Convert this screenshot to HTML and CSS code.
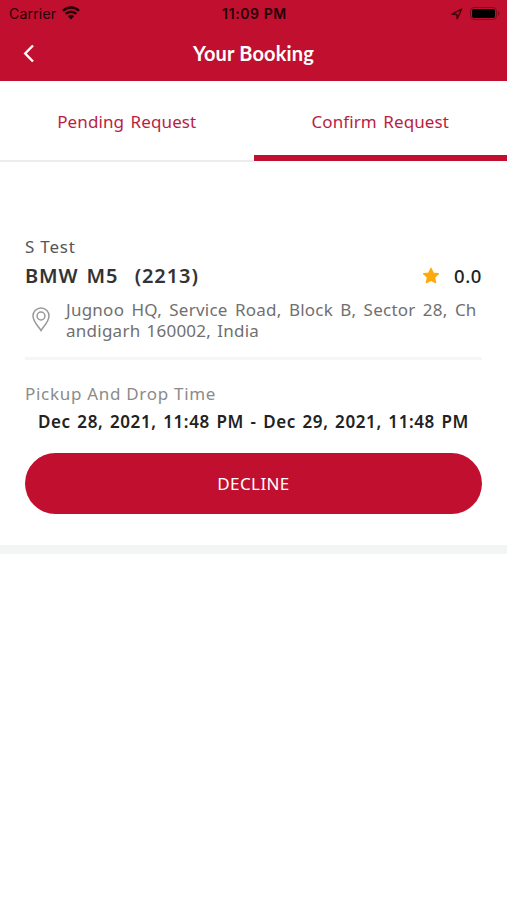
FILE: index.html
```html
<!DOCTYPE html>
<html lang="en">
<head>
  <meta charset="UTF-8">
  <meta name="viewport" content="width=device-width, initial-scale=1">
  <title>Your Booking</title>
  <link rel="stylesheet" href="styles.css">
</head>
<body>
  <header class="header">
    <div class="status-bar">
      <div class="status-left">
        <span class="carrier">Carrier</span>
        <svg class="wifi" viewBox="0 0 18 14" width="18" height="14">
          <path d="M1 4.8a11.500 11.500 0 0 1 16 0M3.700 7.900a7.600 7.600 0 0 1 10.600 0" fill="none" stroke="#240006" stroke-width="2.500"/>
          <path d="M9 13.400L5.900 10.300a4.500 4.500 0 0 1 6.200 0z" fill="#240006"/>
        </svg>
      </div>
      <span class="time">11:09 PM</span>
      <div class="status-right">
        <svg class="location" viewBox="0 0 12 12" width="12" height="12">
          <path d="M1 6.200L10.600 1.200 6.200 10.800 5.800 6.400z" fill="none" stroke="#4a000b" stroke-width="1.500" stroke-linejoin="round"/>
        </svg>
        <svg class="battery" viewBox="0 0 30 13" width="30" height="13">
          <rect x="0.500" y="0.500" width="26" height="12" rx="3.500" fill="none" stroke="#85091e"/>
          <rect x="2" y="2" width="23" height="9" rx="2" fill="#000"/>
          <path d="M28 4.300c2 .9 2 3.500 0 4.400z" fill="#85091e"/>
        </svg>
      </div>
    </div>
    <div class="nav-bar">
      <a class="back" href="#" aria-label="Back">
        <svg viewBox="0 0 12 20" width="12" height="20">
          <path d="M10 1.500L2.200 9.500l7.800 8" fill="none" stroke="#fff" stroke-width="2.400"/>
        </svg>
      </a>
      <h1>Your Booking</h1>
    </div>
  </header>

  <nav class="tabs">
    <a class="tab" href="#">Pending Request</a>
    <a class="tab active" href="#">Confirm Request</a>
  </nav>

  <main class="booking">
    <p class="owner">S Test</p>
    <div class="car-row">
      <h2>BMW M5 &nbsp;(2213)</h2>
      <div class="rating">
        <svg viewBox="0 0 18 18" width="18" height="18">
          <path d="M9 1.500l2.200 4.700 5.100.6-3.800 3.500 1 5.200L9 13l-4.500 2.500 1-5.200L1.700 6.800l5.100-.6z" fill="#ffa90a" stroke="#ffa90a" stroke-width="1.500" stroke-linejoin="round"/>
        </svg>
        <span class="score">0.0</span>
      </div>
    </div>
    <div class="address">
      <svg class="pin" viewBox="0 0 18 25" width="18" height="25">
        <path d="M9 23.500C6.500 19.500 1 14.500 1 8.900a8 8 0 0 1 16 0C17 14.500 11.500 19.500 9 23.500z" fill="none" stroke="#999" stroke-width="1.500"/>
        <circle cx="9" cy="9" r="3.900" fill="none" stroke="#999" stroke-width="1.500"/>
      </svg>
      <p><span class="street">Jugnoo HQ, Service Road, Block B, Sector 28, Ch</span><br><span class="city">andigarh 160002, India</span></p>
    </div>
    <p class="label">Pickup And Drop Time</p>
    <p class="dates">Dec 28, 2021, 11:48 PM - Dec 29, 2021, 11:48 PM</p>
    <button type="button" class="btn">DECLINE</button>
  </main>
</body>
</html>
```

FILE: styles.css
```css
* {
  margin: 0;
  padding: 0;
  box-sizing: border-box;
}

body {
  background: #fff;
  font-family: "Noto Sans", sans-serif;
  min-height: 100vh;
}

a {
  color: inherit;
  text-decoration: none;
}

svg {
  display: block;
}

.header {
  height: 81px;
  background: #c1102f;
}

.status-bar {
  display: grid;
  grid-template-columns: 1fr auto 1fr;
  align-items: center;
  height: 27px;
  padding: 0 7px 0 9px;
  font-family: Inter, sans-serif;
  color: #240006;
}

.status-left,
.status-right {
  display: flex;
  align-items: center;
}

.status-left {
  gap: 6px;
}

.status-right {
  justify-content: flex-end;
  gap: 7px;
}

.carrier {
  font-size: 14px;
  letter-spacing: 0.2px;
}

.wifi {
  margin-bottom: 2px;
}

.time {
  font-size: 14px;
  font-weight: 600;
  letter-spacing: 0.6px;
}

.nav-bar {
  display: grid;
  grid-template-columns: 60px 1fr 60px;
  align-items: center;
  height: 53px;
}

.back {
  padding-left: 23px;
}

.nav-bar h1 {
  padding-bottom: 2px;
  color: #fff;
  font-family: Lato, sans-serif;
  font-size: 20px;
  font-weight: 700;
  line-height: 28px;
  letter-spacing: 0.15px;
  text-align: center;
}

.tabs {
  display: grid;
  grid-template-columns: 1fr 1fr;
  height: 82px;
}

.tab {
  height: 81px;
  padding-top: 28px;
  border-bottom: 2px solid #ececec;
  color: #b91e41;
  font-size: 17px;
  line-height: 26px;
  letter-spacing: 0.1px;
  word-spacing: 2px;
  text-align: center;
}

.tab.active {
  height: 80px;
  border-bottom: 6px solid #c1102f;
}

.booking {
  padding: 71px 25px 31px;
  border-bottom: 9px solid #f3f5f5;
}

.owner {
  color: #555;
  font-size: 17px;
  line-height: 26px;
  letter-spacing: 0.8px;
}

.car-row {
  display: flex;
  justify-content: space-between;
  align-items: center;
  height: 31px;
}

.car-row h2 {
  color: #333;
  font-size: 20px;
  font-weight: 600;
  letter-spacing: 0.9px;
  word-spacing: 2px;
}

.rating {
  display: flex;
  align-items: center;
  gap: 14px;
}

.score {
  color: #222;
  font-size: 18.5px;
  font-weight: 500;
  letter-spacing: 0.6px;
}

.address {
  display: flex;
  gap: 16px;
  padding: 8px 0 16px 7px;
  border-bottom: 3px solid #f6f6f6;
  color: #707070;
  font-size: 17px;
  line-height: 21px;
  white-space: nowrap;
}

.pin {
  margin-top: 8px;
}

.street {
  letter-spacing: 0.25px;
  word-spacing: 2.6px;
}

.city {
  letter-spacing: 0.25px;
  word-spacing: 1.4px;
}

.label {
  margin-top: 21px;
  color: #8b8b8b;
  font-size: 17px;
  line-height: 26px;
  letter-spacing: 0.7px;
}

.dates {
  padding-left: 13px;
  color: #222;
  font-size: 17px;
  font-weight: 600;
  line-height: 30px;
  letter-spacing: 0.6px;
  word-spacing: 1.6px;
  white-space: nowrap;
}

.btn {
  display: block;
  width: 100%;
  height: 61px;
  margin-top: 16px;
  border: none;
  border-radius: 31px;
  background: #c1102f;
  color: #fff;
  font-family: "Noto Sans", sans-serif;
  font-size: 17px;
  letter-spacing: 0.4px;
  cursor: pointer;
}
```
